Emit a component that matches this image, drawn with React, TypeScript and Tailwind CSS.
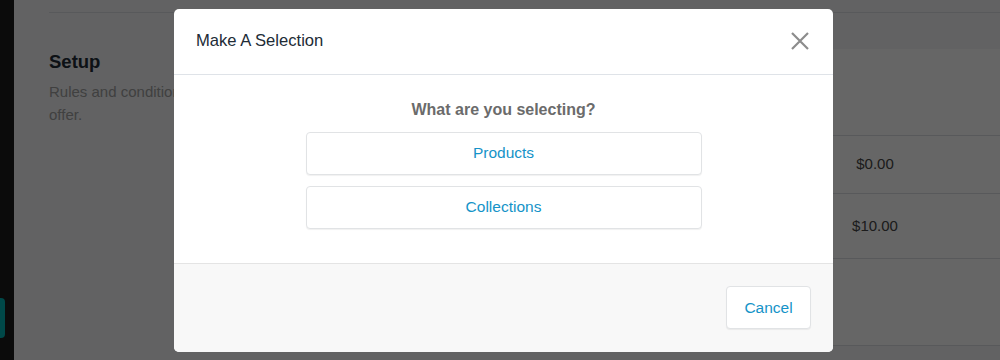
import React from "react";

export default function App() {
  return (
    <div
      className="relative flex h-[360px] w-[1000px] overflow-hidden bg-[#f4f6f8]"
      style={{ fontFamily: '"Liberation Sans", Arial, sans-serif' }}
    >
      {/* sidebar */}
      <div className="flex w-[14px] shrink-0 flex-col bg-[#1c1c1c] pt-[298px]">
        <div className="h-[40px] w-[5px] rounded-r-[4px] bg-[#00b4b4]" />
      </div>

      {/* main */}
      <div className="flex flex-1 flex-col pl-[35px] pt-[12px]">
        <div className="border-t border-[#dcdfe3]" />
        <div className="flex flex-1">
          <div className="w-[280px] shrink-0 pt-[37px]">
            <div className="text-[18.5px] font-bold leading-[24px] text-[#212b36]">Setup</div>
            <div className="mt-[6px] text-[15px] leading-[23px] text-[#a0a0a0]">
              Rules and conditions that apply to this
              <br />
              offer.
            </div>
          </div>
          <div className="mt-[36px] mb-[14px] flex flex-1 flex-col border-b border-[#dcdfe3] bg-white">
            <div className="h-[87px] border-b border-[#dcdfe3]" />
            <div className="flex h-[58px] items-center justify-end border-b border-[#dcdfe3] pr-[100px] text-[15px] text-[#464646]">
              <span className="w-[50px] text-center">$0.00</span>
            </div>
            <div className="flex h-[65px] items-center justify-end border-b border-[#dcdfe3] pr-[100px] text-[15px] text-[#464646]">
              <span className="w-[50px] text-center">$10.00</span>
            </div>
            <div className="flex-1" />
          </div>
        </div>
      </div>

      {/* overlay + modal */}
      <div className="absolute inset-0 flex items-center justify-center bg-black/60 pl-[7px]">
        <div className="flex h-[343px] w-[659px] flex-col overflow-hidden rounded-[5px] bg-white">
          <div className="flex h-[66px] shrink-0 items-center justify-between border-b border-[#dfe3e8] pl-[22px] pr-[21px]">
            <span className="text-[16.6px] text-[#212b36]">Make A Selection</span>
            <button className="flex h-[22px] w-[24px] items-center justify-center rounded-[4px]">
              <svg width="20" height="20" viewBox="0 0 20 20" fill="none">
                <path d="M2 2L18 18M18 2L2 18" stroke="#8c8c8c" strokeWidth="2.2" strokeLinecap="butt" />
              </svg>
            </button>
          </div>
          <div className="flex flex-1 flex-col items-center pt-[23px]">
            <div className="text-[16px] font-bold leading-[24px] text-[#6b6b6b]">What are you selecting?</div>
            <button className="mt-[10px] h-[43px] w-[396px] rounded-[4px] border border-[#e1e3e5] bg-white text-[15.5px] text-[#1593c8] shadow-[0_1px_1px_rgba(0,0,0,0.06)]">
              Products
            </button>
            <button className="mt-[11px] h-[43px] w-[396px] rounded-[4px] border border-[#e1e3e5] bg-white text-[15.5px] text-[#1593c8] shadow-[0_1px_1px_rgba(0,0,0,0.06)]">
              Collections
            </button>
          </div>
          <div className="flex h-[89px] shrink-0 items-center justify-end border-t border-[#e4e4e4] bg-[#f8f8f8] pr-[22px]">
            <button className="h-[43px] w-[85px] rounded-[4px] border border-[#e1e3e5] bg-white text-[15.5px] text-[#1593c8] shadow-[0_1px_1px_rgba(0,0,0,0.06)]">
              Cancel
            </button>
          </div>
        </div>
      </div>
    </div>
  );
}
